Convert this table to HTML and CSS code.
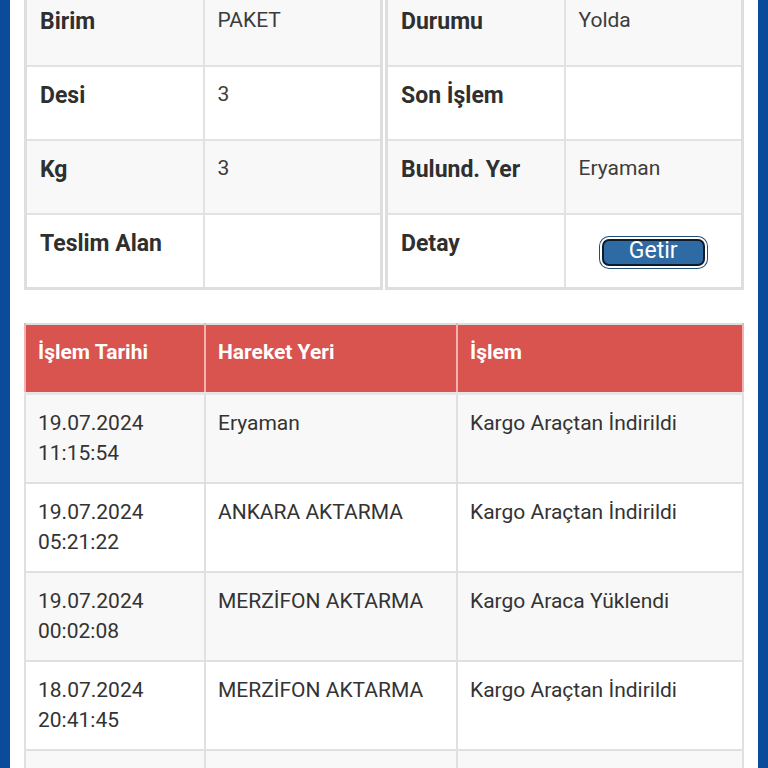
FILE: index.html
```html
<!DOCTYPE html>
<html lang="tr">
<head>
<meta charset="utf-8">
<title>Kargo Takip</title>
<link rel="stylesheet" href="styles.css">
</head>
<body>
<div class="frame">
  <div class="summary">
    <table class="info">
      <colgroup><col class="c-label"><col></colgroup>
      <tr class="odd"><th>Birim</th><td>PAKET</td></tr>
      <tr><th>Desi</th><td>3</td></tr>
      <tr class="odd"><th>Kg</th><td>3</td></tr>
      <tr><th>Teslim Alan</th><td></td></tr>
    </table>
    <table class="info">
      <colgroup><col class="c-label"><col></colgroup>
      <tr class="odd"><th>Durumu</th><td>Yolda</td></tr>
      <tr><th>Son İşlem</th><td></td></tr>
      <tr class="odd"><th>Bulund. Yer</th><td>Eryaman</td></tr>
      <tr><th>Detay</th><td class="btn-cell"><button class="btn" type="button">Getir</button></td></tr>
    </table>
  </div>

  <table class="history">
    <colgroup><col class="h1"><col class="h2"><col></colgroup>
    <thead>
      <tr><th>İşlem Tarihi</th><th>Hareket Yeri</th><th>İşlem</th></tr>
    </thead>
    <tbody>
      <tr class="odd"><td>19.07.2024<br>11:15:54</td><td>Eryaman</td><td>Kargo Araçtan İndirildi</td></tr>
      <tr><td>19.07.2024<br>05:21:22</td><td>ANKARA AKTARMA</td><td>Kargo Araçtan İndirildi</td></tr>
      <tr class="odd"><td>19.07.2024<br>00:02:08</td><td>MERZİFON AKTARMA</td><td>Kargo Araca Yüklendi</td></tr>
      <tr><td>18.07.2024<br>20:41:45</td><td>MERZİFON AKTARMA</td><td>Kargo Araçtan İndirildi</td></tr>
      <tr class="odd empty"><td></td><td></td><td></td></tr>
    </tbody>
  </table>
</div>
</body>
</html>
```

FILE: styles.css
```css
html, body {
  margin: 0;
  padding: 0;
  background: #ffffff;
}

body {
  font-family: Roboto, "Noto Sans", Arial, sans-serif;
  color: #333333;
  overflow: hidden;
}

.frame {
  box-sizing: border-box;
  min-height: 900px;
  margin-top: -10px;
  border-left: 10px solid #0b4b9c;
  border-right: 10px solid #0b4b9c;
  padding: 0 14px 40px;
}

.summary {
  display: grid;
  grid-template-columns: 1fr 1fr;
  column-gap: 2px;
  align-items: start;
}

.info {
  width: 100%;
  border-collapse: collapse;
  border: 3px solid #dedede;
  table-layout: fixed;
}

.info .c-label {
  width: 50%;
}

.info th,
.info td {
  border: 2px solid #e2e2e2;
  text-align: left;
  vertical-align: top;
  padding: 12px 13px 27px;
}

.info th {
  font-size: 23px;
  line-height: 33px;
  font-weight: 700;
  color: #2f2f2f;
}

.info td {
  font-size: 21px;
  line-height: 30px;
  color: #3c3c3c;
}

.info tr.odd th,
.info tr.odd td {
  background: #f8f8f8;
}

.info td.btn-cell {
  text-align: center;
  padding-bottom: 21px;
}

.btn {
  box-sizing: border-box;
  width: 103px;
  height: 27px;
  margin-top: 12px;
  padding: 0 0 4px;
  border: 2px solid #0f1b28;
  border-radius: 7px;
  box-shadow: 0 0 0 2px #ffffff, 0 0 0 3px #1e4d78;
  background: #2e6aa3;
  color: #ffffff;
  font-family: Roboto, "Noto Sans", Arial, sans-serif;
  font-size: 23px;
  line-height: 19px;
  vertical-align: top;
}

.history {
  width: 100%;
  margin-top: 33px;
  border-collapse: collapse;
  border: 2px solid #dedede;
  table-layout: fixed;
}

.history .h1 {
  width: 180px;
}

.history .h2 {
  width: 252px;
}

.history th {
  background: #d9534f;
  color: #ffffff;
  font-size: 21px;
  line-height: 30px;
  font-weight: 700;
  text-align: left;
  vertical-align: top;
  padding: 12px 12px 25px;
  border-left: 2px solid #efb4b2;
  border-right: 2px solid #efb4b2;
  border-bottom: 3px solid #e6e6e6;
}

.history td {
  font-size: 21px;
  line-height: 30px;
  color: #333333;
  vertical-align: top;
  padding: 13px 12px 14px;
  border: 2px solid #e0e0e0;
}

.history tr.empty td {
  height: 60px;
}

.history tr.odd td {
  background: #f8f8f8;
}
```
